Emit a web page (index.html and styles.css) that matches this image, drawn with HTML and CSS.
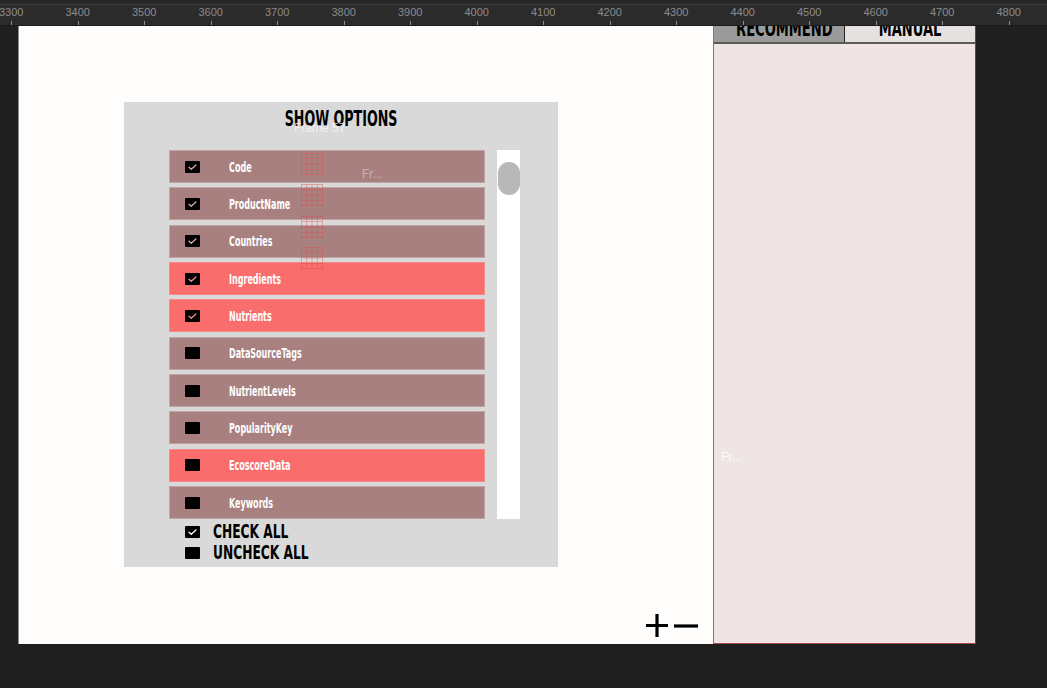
FILE: index.html
```html
<!DOCTYPE html>
<html>
<head>
<meta charset="utf-8">
<link rel="stylesheet" href="styles.css">
</head>
<body>
<div class="ruler">
  <div class="ruler-top"></div>
  <div class="ruler-scale">
    <div class="mark"><span>3300</span></div>
    <div class="mark"><span>3400</span></div>
    <div class="mark"><span>3500</span></div>
    <div class="mark"><span>3600</span></div>
    <div class="mark"><span>3700</span></div>
    <div class="mark"><span>3800</span></div>
    <div class="mark"><span>3900</span></div>
    <div class="mark"><span>4000</span></div>
    <div class="mark"><span>4100</span></div>
    <div class="mark"><span>4200</span></div>
    <div class="mark"><span>4300</span></div>
    <div class="mark"><span>4400</span></div>
    <div class="mark"><span>4500</span></div>
    <div class="mark"><span>4600</span></div>
    <div class="mark"><span>4700</span></div>
    <div class="mark"><span>4800</span></div>
  </div>
</div>
<div class="stage">
  <div class="frame">
    <div class="dialog">
      <div class="dialog-title"><span class="cond">SHOW OPTIONS</span></div>
      <div class="ghost ghost-frame">Frame 57</div>
      <div class="ghost ghost-fr">Fr...</div>
      <svg class="ghost-grid g1" viewBox="0 0 22 22"><path d="M0 .5H22M0 5.5H22M0 11H22M0 16.5H22M0 21.5H22M.5 0V22M5.5 0V22M11 0V22M16.5 0V22M21.5 0V22"/></svg>
      <svg class="ghost-grid g2" viewBox="0 0 22 22"><path d="M0 .5H22M0 5.5H22M0 11H22M0 16.5H22M0 21.5H22M.5 0V22M5.5 0V22M11 0V22M16.5 0V22M21.5 0V22"/></svg>
      <svg class="ghost-grid g3" viewBox="0 0 22 22"><path d="M0 .5H22M0 5.5H22M0 11H22M0 16.5H22M0 21.5H22M.5 0V22M5.5 0V22M11 0V22M16.5 0V22M21.5 0V22"/></svg>
      <svg class="ghost-grid g4" viewBox="0 0 22 22"><path d="M0 .5H22M0 5.5H22M0 11H22M0 16.5H22M0 21.5H22M.5 0V22M5.5 0V22M11 0V22M16.5 0V22M21.5 0V22"/></svg>
      <div class="dialog-body">
        <div class="opt-list">
          <div class="opt"><span class="box checked"><svg viewBox="0 0 15 12"><path d="M4 6.2l2.3 2 4.6-4.2"/></svg></span><span class="opt-label">Code</span></div>
          <div class="opt"><span class="box checked"><svg viewBox="0 0 15 12"><path d="M4 6.2l2.3 2 4.6-4.2"/></svg></span><span class="opt-label">ProductName</span></div>
          <div class="opt"><span class="box checked"><svg viewBox="0 0 15 12"><path d="M4 6.2l2.3 2 4.6-4.2"/></svg></span><span class="opt-label">Countries</span></div>
          <div class="opt hot"><span class="box checked"><svg viewBox="0 0 15 12"><path d="M4 6.2l2.3 2 4.6-4.2"/></svg></span><span class="opt-label">Ingredients</span></div>
          <div class="opt hot"><span class="box checked"><svg viewBox="0 0 15 12"><path d="M4 6.2l2.3 2 4.6-4.2"/></svg></span><span class="opt-label">Nutrients</span></div>
          <div class="opt"><span class="box"></span><span class="opt-label">DataSourceTags</span></div>
          <div class="opt"><span class="box"></span><span class="opt-label">NutrientLevels</span></div>
          <div class="opt"><span class="box"></span><span class="opt-label">PopularityKey</span></div>
          <div class="opt hot"><span class="box"></span><span class="opt-label">EcoscoreData</span></div>
          <div class="opt"><span class="box"></span><span class="opt-label">Keywords</span></div>
        </div>
        <div class="scrollbar"><div class="thumb"></div></div>
      </div>
      <div class="bulk">
        <div class="bulk-row"><span class="box checked light"><svg viewBox="0 0 15 12"><path d="M4 6.2l2.3 2 4.6-4.2"/></svg></span><span class="bulk-label">CHECK ALL</span></div>
        <div class="bulk-row"><span class="box"></span><span class="bulk-label">UNCHECK ALL</span></div>
      </div>
    </div>
    <div class="zoom-ctrl">
      <svg class="zc-plus" viewBox="0 0 22 23"><path d="M0 11.5H22M11 0V23"/></svg>
      <svg class="zc-minus" viewBox="0 0 24 4"><path d="M0 2H24"/></svg>
    </div>
  </div>
  <aside class="panel">
    <div class="tabs">
      <div class="tab tab-rec"><span>RECOMMEND</span></div>
      <div class="tab tab-man"><span>MANUAL</span></div>
    </div>
    <div class="panel-body">
      <div class="panel-ghost">Fr...</div>
    </div>
  </aside>
</div>
</body>
</html>
```

FILE: styles.css
```css
* { box-sizing: border-box; }
html, body {
  margin: 0;
  padding: 0;
  background: #1f1f1f;
  width: 1047px;
  height: 688px;
  overflow: hidden;
}
body {
  font-family: "DejaVu Sans Condensed", "Liberation Sans", sans-serif;
}

/* ruler */
.ruler {
  height: 26px;
  background: #2b2b2b;
  overflow: hidden;
}
.ruler-top {
  height: 4px;
  background: #272727;
  border-bottom: 1px solid #3a3a3a;
  box-sizing: content-box;
}
.ruler-scale {
  display: flex;
  height: 21px;
  margin-left: -22px;
  border-bottom: 1px solid #1c1c1c;
}
.mark {
  flex: 0 0 66.5px;
  position: relative;
  text-align: center;
  font-family: "Liberation Sans", Arial, sans-serif;
  font-size: 11px;
  color: #8b8b8b;
  line-height: 13px;
  padding-top: 1px;
}
.mark::after {
  content: "";
  position: absolute;
  left: 33px;
  bottom: 0;
  width: 1px;
  height: 4px;
  background: #8b8b8b;
}

/* stage */
.stage {
  display: flex;
  height: 618px;
  padding-left: 18px;
}
.frame {
  width: 695px;
  height: 618px;
  background: #fffcfc;
  border-left: 1px solid #8d8d8d;
  display: flex;
  flex-direction: column;
  align-items: flex-start;
}

/* dialog */
.dialog {
  position: relative;
  margin-top: 76px;
  margin-left: 105px;
  width: 434px;
  height: 465px;
  background: #d9d9d9;
  display: flex;
  flex-direction: column;
}
.dialog-title {
  text-align: center;
  font-weight: bold;
  font-size: 21px;
  line-height: 24px;
  padding-top: 5px;
  height: 48px;
  color: #000;
}
.cond {
  display: inline-block;
  transform: scaleX(0.67);
  transform-origin: 50% 50%;
}
.dialog-body {
  display: flex;
  gap: 12px;
  padding-left: 45px;
}
.opt-list {
  width: 316px;
  display: flex;
  flex-direction: column;
  gap: 4.35px;
}
.opt {
  height: 33px;
  background: #a98080;
  border: 1px solid #bfa5a5;
  display: flex;
  align-items: center;
  padding-left: 15px;
  --ck: #d2abab;
}
.opt.hot {
  background: #f96d6d;
  border-color: #f58a8a;
  --ck: #f58d8d;
}
.box {
  flex: 0 0 15px;
  width: 15px;
  height: 12px;
  background: #000;
  border-radius: 1px;
  display: flex;
}
.box svg {
  width: 15px;
  height: 12px;
}
.box svg path {
  fill: none;
  stroke: var(--ck, #fff);
  stroke-width: 1.3;
  stroke-linecap: round;
  stroke-linejoin: round;
}
.box.light { --ck: #ffffff; }
.opt-label {
  display: inline-block;
  margin-left: 29px;
  color: #fff;
  font-size: 13.5px;
  font-weight: bold;
  transform: scaleX(0.66);
  transform-origin: 0 50%;
  white-space: nowrap;
}
.scrollbar {
  width: 23px;
  height: 369px;
  background: #fff;
  padding-top: 12px;
  padding-left: 1px;
}
.thumb {
  width: 22px;
  height: 33px;
  border-radius: 11px;
  background: #b8b8b8;
}

.bulk {
  padding-left: 61px;
  padding-top: 2px;
  display: flex;
  flex-direction: column;
}
.bulk-row {
  display: flex;
  align-items: center;
  height: 21px;
}
.bulk-row .box { margin-right: 13px; }
.bulk-label {
  display: inline-block;
  font-weight: bold;
  font-size: 20px;
  line-height: 21px;
  height: 21px;
  color: #000;
  transform: scaleX(0.68);
  transform-origin: 0 50%;
  white-space: nowrap;
}

/* ghost overlays (design-tool artefacts) */
.ghost {
  position: absolute;
  font-family: "Liberation Sans", Arial, sans-serif;
  font-size: 12px;
  color: rgba(255,255,255,0.7);
  pointer-events: none;
}
.ghost-frame { left: 170px; top: 19px; font-size: 12px; }
.ghost-fr { left: 238px; top: 65px; color: rgba(255,255,255,0.4); }
.ghost-grid {
  position: absolute;
  left: 177px;
  width: 22px;
  height: 22px;
  opacity: 0.55;
}
.ghost-grid path { stroke: #e04848; stroke-width: 0.7; fill: none; }
.g1 { top: 51px; }
.g2 { top: 82px; }
.g3 { top: 114px; }
.g4 { top: 145px; }

/* zoom control */
.zoom-ctrl {
  margin-top: auto;
  align-self: flex-end;
  margin-right: 15px;
  margin-bottom: 7px;
  display: flex;
  align-items: center;
  gap: 6px;
}
.zoom-ctrl svg path { stroke: #000; stroke-width: 3.2; fill: none; }
.zc-plus { width: 22px; height: 23px; }
.zc-minus { width: 24px; height: 4px; }

/* right panel */
.panel {
  width: 263px;
  height: 618px;
  background: #efe5e5;
  border-left: 1px solid #b46060;
  border-right: 1px solid #8a3535;
  border-bottom: 1px solid #a04a4a;
  display: flex;
  flex-direction: column;
}
.tabs {
  display: flex;
  height: 18px;
  border-bottom: 2px solid #5a5a5a;
}
.tab {
  flex: 1;
  overflow: hidden;
  text-align: center;
  font-weight: bold;
  font-size: 22px;
  color: #000;
}
.tab span {
  display: block;
  line-height: 5px;
  height: 5px;
  transform: scaleX(0.66);
  transform-origin: 50% 50%;
  white-space: nowrap;
}
.tab-rec {
  background: #9b9b9b;
  border-right: 1px solid #222;
  flex: 0 0 131px;
}
.tab-man { background: #e6e1e1; }
.panel-body {
  flex: 1;
  padding-top: 406px;
  padding-left: 7px;
}
.panel-ghost {
  font-family: "Liberation Sans", Arial, sans-serif;
  font-size: 12px;
  color: rgba(255,255,255,0.8);
}
```
